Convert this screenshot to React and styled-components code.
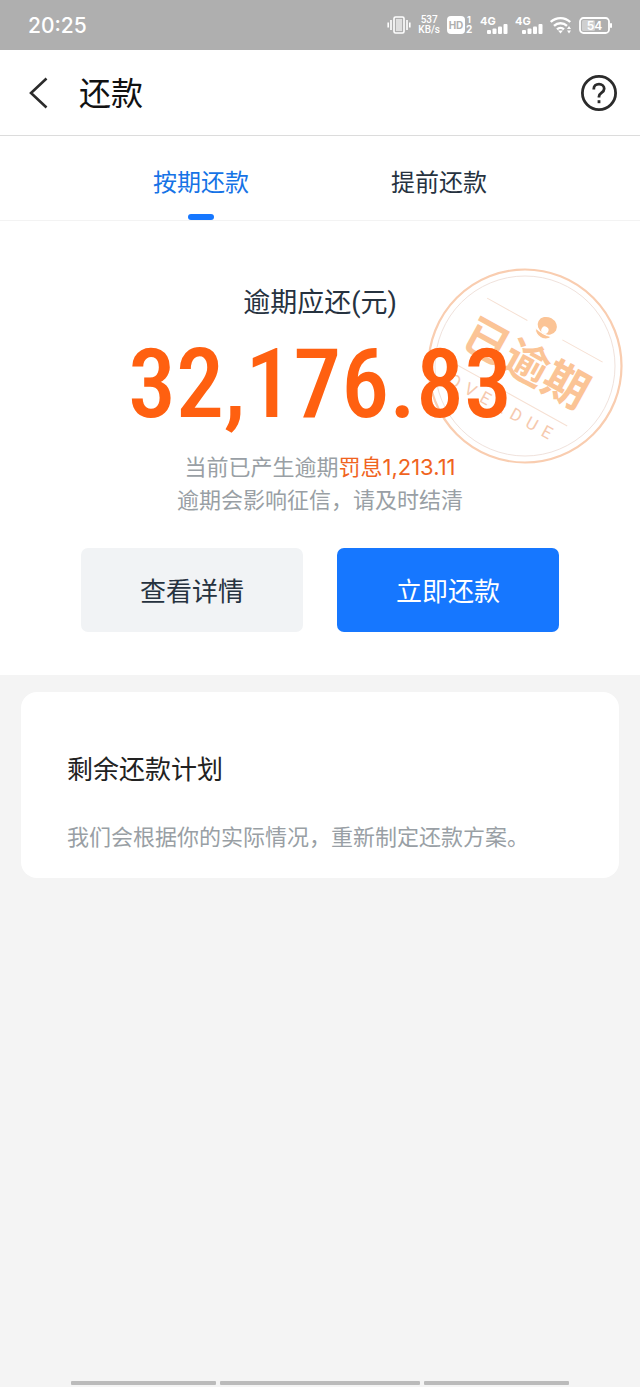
import React, { useState } from 'react';
import styled, { createGlobalStyle } from 'styled-components';

const GlobalStyle = createGlobalStyle`
  * {
    box-sizing: border-box;
  }

  body {
    margin: 0;
    background: #f4f4f4;
    color: #26323f;
    font-family: Roboto, "Noto Sans CJK SC", sans-serif;
  }

  h1, h2, p {
    margin: 0;
    font-weight: 400;
  }

  button {
    border: 0;
    padding: 0;
    background: none;
    font-family: inherit;
    cursor: pointer;
  }
`;

const Page = styled.div`
  display: flex;
  flex-direction: column;
  min-height: 100vh;
`;

const StatusBar = styled.div`
  display: flex;
  align-items: center;
  justify-content: space-between;
  height: 50px;
  padding: 0 27px 0 28px;
  background: #afafaf;
  color: #fff;
  font-family: Inter, sans-serif;
`;

const Clock = styled.time`
  padding-top: 2px;
  font-size: 21px;
  font-weight: 500;
  line-height: 28px;
`;

const StatusIcons = styled.div`
  display: flex;
  align-items: center;
  gap: 7px;
`;

const NetSpeed = styled.div`
  display: flex;
  flex-direction: column;
  font-family: Roboto, sans-serif;
  font-size: 10px;
  font-weight: 500;
  line-height: 10px;
  text-align: center;
`;

const Header = styled.header`
  display: flex;
  align-items: center;
  height: 86px;
  padding: 0 22px 0 28px;
  background: #fff;
  border-bottom: 1px solid #dcdcdc;
`;

const IconButton = styled.button`
  display: flex;
  color: #2b2b2b;
`;

const PageTitle = styled.h1`
  flex: 1;
  padding: 2px 0 0 31px;
  color: #111;
  font-size: 32px;
  line-height: 40px;
`;

const Tabs = styled.nav`
  display: flex;
  height: 85px;
  padding: 0 82px;
  background: #fff;
  border-bottom: 1px solid #f3f3f3;
`;

const Tab = styled.button`
  display: flex;
  flex: 1;
  flex-direction: column;
  align-items: center;
  justify-content: space-between;
  padding-top: 29px;
  color: ${props => (props.$active ? '#1673e6' : '#26323f')};
  font-size: 24px;
  line-height: 36px;

  &::after {
    content: '';
    width: 26px;
    height: 6px;
    border-radius: 3px;
    background: ${props => (props.$active ? '#1677ff' : 'transparent')};
  }
`;

const Summary = styled.section`
  position: relative;
  display: flex;
  flex-direction: column;
  align-items: center;
  padding: 62px 81px 43px;
  background: #fff;
`;

const Stamp = styled.svg`
  position: absolute;
  top: 45px;
  right: 15px;
`;

const Label = styled.h2`
  font-size: 27px;
  line-height: 40px;
`;

const Amount = styled.p`
  position: relative;
  padding-bottom: 6px;
  color: #ff6010;
  font-family: "Roboto Condensed", Roboto, sans-serif;
  font-size: 96px;
  font-weight: 500;
  line-height: 122px;
`;

const Notice = styled.p`
  position: relative;
  color: #999fa5;
  font-size: 22px;
  line-height: 33px;
  text-align: center;
`;

const Penalty = styled.span`
  color: #f0641e;
  font-family: Inter, "Noto Sans CJK SC", sans-serif;
`;

const Actions = styled.div`
  display: flex;
  gap: 34px;
  width: 100%;
  margin-top: 31px;
`;

const ActionButton = styled.button`
  flex: 1;
  height: 84px;
  padding-bottom: 2px;
  border-radius: 7px;
  background: ${props => (props.$primary ? '#1677ff' : '#f1f3f5')};
  color: ${props => (props.$primary ? '#fff' : '#26323f')};
  font-size: 26px;
`;

const PlanCard = styled.section`
  margin: 17px 21px;
  padding: 58px 46px 24px;
  border-radius: 16px;
  background: #fff;
`;

const PlanTitle = styled.h2`
  color: #222;
  font-size: 26px;
  line-height: 40px;
`;

const PlanText = styled.p`
  margin-top: 31px;
  color: #999fa5;
  font-size: 22px;
  line-height: 33px;
`;

const GestureBar = styled.div`
  display: flex;
  gap: 4px;
  margin-top: auto;
  padding: 0 71px 2px;
`;

const GestureSegment = styled.span`
  flex: ${props => props.$grow};
  height: 4px;
  border-radius: 1px;
  background: #bbb;
`;

const VibrateIcon = () => (
  <svg width="24" height="20" viewBox="0 0 24 20" fill="none" stroke="#fff" strokeWidth="1.6">
    <rect x="7" y="2" width="10" height="16" rx="1.5" />
    <rect x="9" y="4" width="6" height="12" fill="#fff" fillOpacity="0.6" stroke="none" />
    <path d="M4 5v10M1.2 7.500v5M20 5v10M22.800 7.500v5" />
  </svg>
);

const HdIcon = () => (
  <svg width="26" height="20" viewBox="0 0 26 20" fill="#fff" fontWeight="700">
    <rect x="0" y="1" width="18" height="18" rx="4" />
    <text x="9" y="14" fontSize="10" textAnchor="middle" fill="#afafaf">HD</text>
    <text x="20" y="8" fontSize="9">1</text>
    <text x="19" y="18" fontSize="10">2</text>
  </svg>
);

const SignalIcon = () => (
  <svg width="28" height="20" viewBox="0 0 28 20" fill="#fff">
    <text x="0" y="10" fontSize="11" fontWeight="700">4G</text>
    <rect x="7" y="15" width="4" height="4" rx="1" />
    <rect x="12.500" y="13.500" width="4" height="5.500" rx="1" />
    <rect x="18" y="11.500" width="4" height="7.500" rx="1" />
    <rect x="23.500" y="9" width="4" height="10" rx="1" />
  </svg>
);

const WifiIcon = () => (
  <svg width="22" height="20" viewBox="0 0 22 20" fill="none" stroke="#fff" strokeWidth="2.400">
    <path d="M.8 7a14 14 0 0 1 19.400 0M4 10.800a9.500 9.500 0 0 1 13 0M7 14.300a5.300 5.300 0 0 1 7 0" />
    <path d="M8 15.500h5l-2.500 3z" fill="#fff" stroke="none" />
    <path d="M17 14h4l-2-3zM17 15.500h4l-2 3z" fill="#fff" stroke="none" />
  </svg>
);

const BatteryIcon = () => (
  <svg width="34" height="20" viewBox="0 0 34 20">
    <rect x="1" y="3" width="29" height="15" rx="3.500" fill="none" stroke="#fff" strokeWidth="1.800" />
    <rect x="3" y="5" width="13" height="11" rx="1.500" fill="#fff" fillOpacity="0.4" />
    <rect x="31" y="8" width="2" height="5" rx="1" fill="#fff" />
    <text x="15.500" y="15" fontSize="12" fontWeight="600" textAnchor="middle" fill="#fff">54</text>
  </svg>
);

const BackIcon = () => (
  <svg width="20" height="32" viewBox="0 0 20 32" fill="none" stroke="currentColor" strokeWidth="2.600">
    <path d="M18.500 1.500 3 16l15.500 14.500" />
  </svg>
);

const HelpIcon = () => (
  <svg width="38" height="38" viewBox="0 0 38 38" fill="none" stroke="currentColor" strokeWidth="2.800">
    <circle cx="19" cy="19" r="16.600" />
    <path d="M13.800 15.500v-.8c0-2.700 2.200-4.500 5.200-4.500s5.200 1.900 5.200 4.500c0 2-1.200 3-2.800 4.100-1.600 1.100-2.400 1.900-2.400 3.600v1.200" />
    <path d="M19 26.200v3" />
  </svg>
);

const OverdueStamp = () => (
  <Stamp width="200" height="200" viewBox="-100 -100 200 200" fill="#fbc496" aria-hidden="true">
    <circle r="96.500" fill="none" stroke="#f9cdb0" strokeWidth="2.200" />
    <circle r="90" fill="none" stroke="#f0e2dc" strokeWidth="1" />
    <g transform="rotate(29)">
      <path d="M-66-41h46M20-41h46M-66 32H66" stroke="#f6e0d3" strokeWidth="1" />
      <ellipse cy="-46" rx="10" ry="8.500" />
      <circle cy="-41" r="3.600" fill="#fff" />
      <path d="M-9-38.500q9 3 18 0q-2 6-9 6t-9-6z" stroke="#fff" strokeWidth="1" />
      <text y="13" fontSize="45" fontWeight="700" textAnchor="middle">已逾期</text>
      <text x="-60" y="53" fontSize="17" letterSpacing="7" fill="#f6c9ae">OVERDUE</text>
    </g>
  </Stamp>
);

const TABS = ['按期还款', '提前还款'];

const App = () => {
  const [tab, setTab] = useState(TABS[0]);
  return (
    <Page>
      <GlobalStyle />
      <StatusBar>
        <Clock>20:25</Clock>
        <StatusIcons>
          <VibrateIcon />
          <NetSpeed>
            <span>537</span>
            <span>KB/s</span>
          </NetSpeed>
          <HdIcon />
          <SignalIcon />
          <SignalIcon />
          <WifiIcon />
          <BatteryIcon />
        </StatusIcons>
      </StatusBar>
      <Header>
        <IconButton aria-label="返回"><BackIcon /></IconButton>
        <PageTitle>还款</PageTitle>
        <IconButton aria-label="帮助"><HelpIcon /></IconButton>
      </Header>
      <Tabs>
        {TABS.map(name => (
          <Tab key={name} $active={name === tab} onClick={() => setTab(name)}>{name}</Tab>
        ))}
      </Tabs>
      <Summary>
        <OverdueStamp />
        <Label>逾期应还(元)</Label>
        <Amount>32,176.83</Amount>
        <Notice>
          当前已产生逾期<Penalty>罚息1,213.11</Penalty>
          <br />
          逾期会影响征信，请及时结清
        </Notice>
        <Actions>
          <ActionButton>查看详情</ActionButton>
          <ActionButton $primary>立即还款</ActionButton>
        </Actions>
      </Summary>
      <PlanCard>
        <PlanTitle>剩余还款计划</PlanTitle>
        <PlanText>我们会根据你的实际情况，重新制定还款方案。</PlanText>
      </PlanCard>
      <GestureBar>
        <GestureSegment $grow={145} />
        <GestureSegment $grow={200} />
        <GestureSegment $grow={145} />
      </GestureBar>
    </Page>
  );
};

export default App;
